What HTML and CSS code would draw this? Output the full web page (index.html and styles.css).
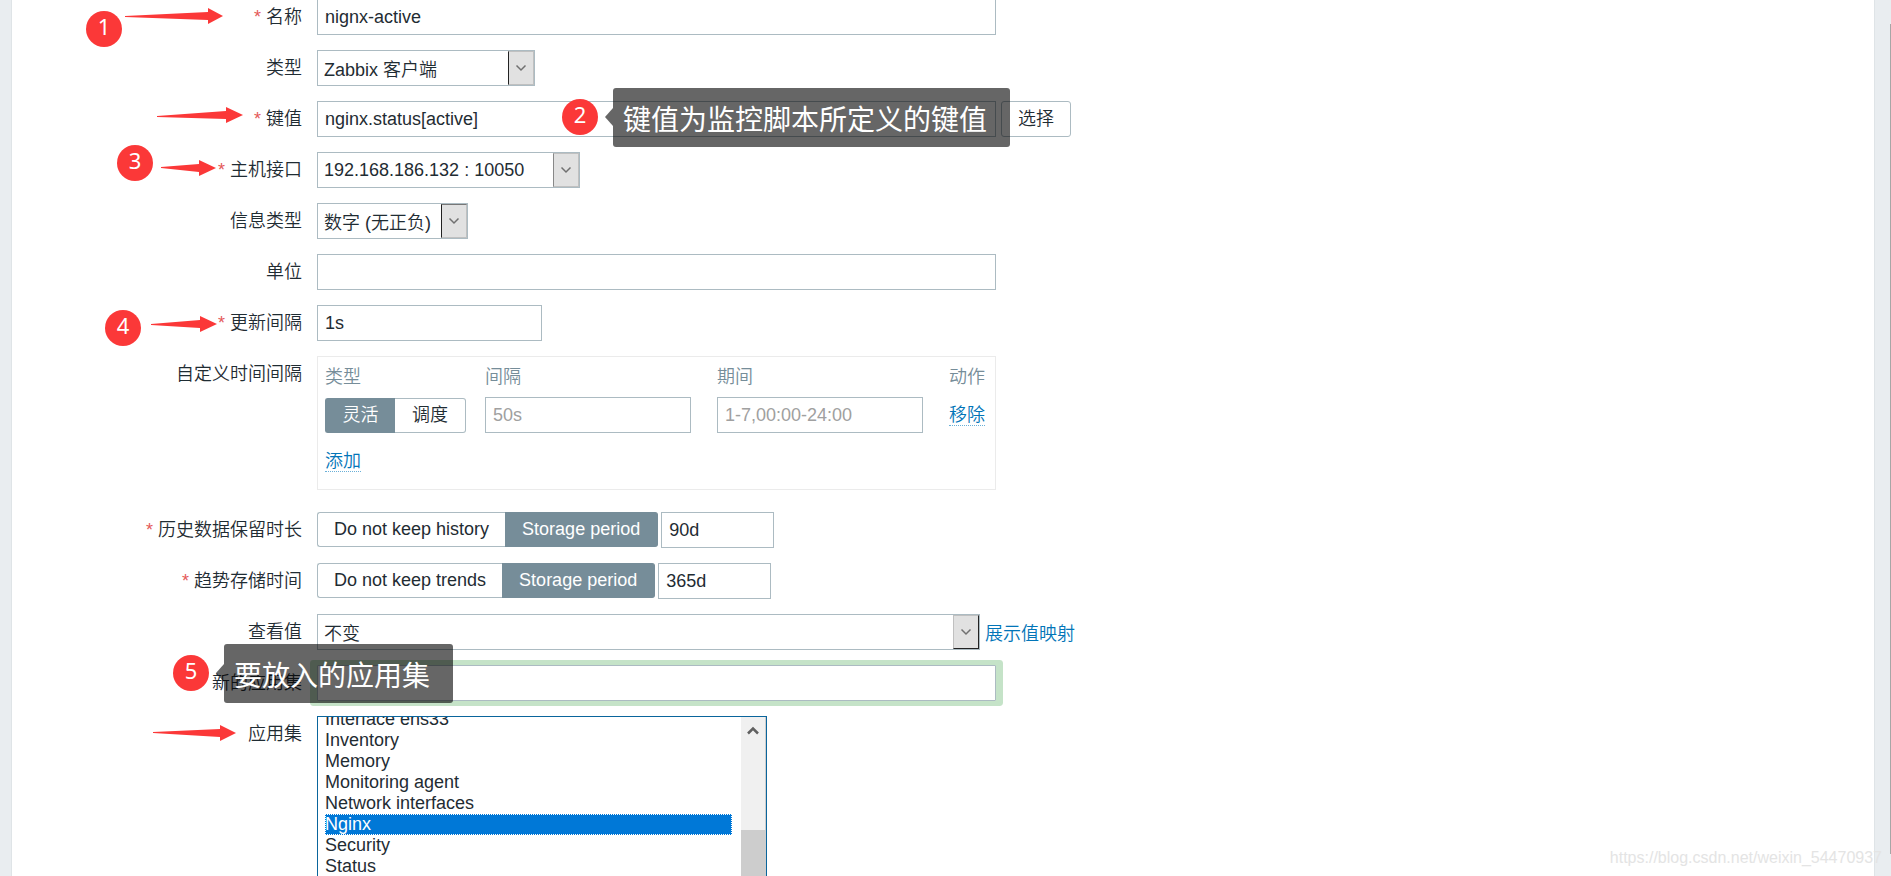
FILE: index.html
```html
<!DOCTYPE html>
<html lang="zh-CN">
<head>
<meta charset="utf-8">
<title>监控项</title>
<link rel="stylesheet" href="styles.css">
</head>
<body>
<main class="panel">
  <form class="form">
    <div class="row">
      <label class="label" for="name"><span class="required">*</span> 名称</label>
      <div class="field"><input class="text wide" id="name" type="text" value="nignx-active"></div>
    </div>
    <div class="row">
      <label class="label" for="type">类型</label>
      <div class="field">
        <div class="select select-type">
          <select id="type"><option>Zabbix 客户端</option></select>
          <span class="arrow arrow-left-dark"><svg viewBox="0 0 12 8"><path d="M1.500 1.500L6 6L10.500 1.500"/></svg></span>
        </div>
      </div>
    </div>
    <div class="row">
      <label class="label" for="key"><span class="required">*</span> 键值</label>
      <div class="field field-spaced">
        <input class="text wide" id="key" type="text" value="nginx.status[active]">
        <button class="button" type="button">选择</button>
      </div>
    </div>
    <div class="row">
      <label class="label" for="host"><span class="required">*</span> 主机接口</label>
      <div class="field">
        <div class="select select-host">
          <select id="host"><option>192.168.186.132 : 10050</option></select>
          <span class="arrow arrow-soft"><svg viewBox="0 0 12 8"><path d="M1.500 1.500L6 6L10.500 1.500"/></svg></span>
        </div>
      </div>
    </div>
    <div class="row">
      <label class="label" for="info">信息类型</label>
      <div class="field">
        <div class="select select-info">
          <select id="info"><option>数字 (无正负)</option></select>
          <span class="arrow arrow-left-dark arrow-top-dark"><svg viewBox="0 0 12 8"><path d="M1.500 1.500L6 6L10.500 1.500"/></svg></span>
        </div>
      </div>
    </div>
    <div class="row">
      <label class="label" for="unit">单位</label>
      <div class="field"><input class="text wide" id="unit" type="text"></div>
    </div>
    <div class="row">
      <label class="label" for="delay"><span class="required">*</span> 更新间隔</label>
      <div class="field"><input class="text medium" id="delay" type="text" value="1s"></div>
    </div>
    <div class="row row-intervals">
      <span class="label">自定义时间间隔</span>
      <div class="field">
        <div class="intervals">
          <table class="intervals-table">
            <thead>
              <tr><th class="col-type">类型</th><th class="col-value">间隔</th><th class="col-value">期间</th><th>动作</th></tr>
            </thead>
            <tbody>
              <tr>
                <td>
                  <div class="segments segments-even">
                    <label class="segment"><input type="radio" name="kind" checked><span>灵活</span></label>
                    <label class="segment"><input type="radio" name="kind"><span>调度</span></label>
                  </div>
                </td>
                <td><input class="text cell" type="text" placeholder="50s" aria-label="间隔"></td>
                <td><input class="text cell" type="text" placeholder="1-7,00:00-24:00" aria-label="期间"></td>
                <td><a class="link dotted" href="#">移除</a></td>
              </tr>
            </tbody>
          </table>
          <a class="link dotted" href="#">添加</a>
        </div>
      </div>
    </div>
    <div class="row">
      <label class="label" for="history"><span class="required">*</span> 历史数据保留时长</label>
      <div class="field field-tight">
        <div class="segments">
          <label class="segment"><input type="radio" name="history"><span>Do not keep history</span></label>
          <label class="segment"><input type="radio" name="history" checked><span>Storage period</span></label>
        </div>
        <input class="text small" id="history" type="text" value="90d">
      </div>
    </div>
    <div class="row">
      <label class="label" for="trends"><span class="required">*</span> 趋势存储时间</label>
      <div class="field field-tight">
        <div class="segments">
          <label class="segment"><input type="radio" name="trends"><span>Do not keep trends</span></label>
          <label class="segment"><input type="radio" name="trends" checked><span>Storage period</span></label>
        </div>
        <input class="text small" id="trends" type="text" value="365d">
      </div>
    </div>
    <div class="row">
      <label class="label" for="view">查看值</label>
      <div class="field field-spaced">
        <div class="select select-view">
          <select id="view"><option>不变</option></select>
          <span class="arrow arrow-right-dark"><svg viewBox="0 0 12 8"><path d="M1.500 1.500L6 6L10.500 1.500"/></svg></span>
        </div>
        <a class="link link-lowered" href="#">展示值映射</a>
      </div>
    </div>
    <div class="row">
      <label class="label" for="newapp">新的应用集</label>
      <div class="field"><input class="text wide highlighted" id="newapp" type="text"></div>
    </div>
    <div class="row">
      <label class="label" for="apps">应用集</label>
      <div class="field">
        <div class="listbox">
          <select class="list" id="apps" multiple size="9">
            <option>Interface ens33</option>
            <option>Inventory</option>
            <option>Memory</option>
            <option>Monitoring agent</option>
            <option>Network interfaces</option>
            <option selected>Nginx</option>
            <option>Security</option>
            <option>Status</option>
          </select>
          <div class="scrollbar">
            <svg class="scroll-up" viewBox="0 0 12 9"><path d="M1 7.500L6 2.500L11 7.500"/></svg>
            <div class="thumb"></div>
          </div>
        </div>
      </div>
    </div>
  </form>
</main>

<div class="page-edge"></div>

<span class="badge badge-1">1</span>
<span class="badge badge-2">2</span>
<span class="badge badge-3">3</span>
<span class="badge badge-4">4</span>
<span class="badge badge-5">5</span>

<svg class="pointer pointer-name" viewBox="0 0 98 16"><path d="M0 8L83 4V0L98 8L83 16V12L0 9Z"/></svg>
<svg class="pointer pointer-key" viewBox="0 0 86 16"><path d="M0 9L69 4V0L86 8L69 16V12L0 10Z"/></svg>
<svg class="pointer pointer-host" viewBox="0 0 55 16"><path d="M0 7L38 4V0L55 8L38 16V12L0 8Z"/></svg>
<svg class="pointer pointer-delay" viewBox="0 0 66 16"><path d="M0 8L49 4V0L66 8L49 16V12L0 9Z"/></svg>
<svg class="pointer pointer-apps" viewBox="0 0 83 16"><path d="M0 7L67 4V0L83 8L67 16V12L0 8Z"/></svg>

<div class="tip tip-key">键值为监控脚本所定义的键值</div>
<div class="tip tip-apps">要放入的应用集</div>

<div class="watermark">https://blog.csdn.net/weixin_54470937</div>
</body>
</html>
```
FILE: styles.css
```css
* { box-sizing: border-box; }

body {
  position: relative;
  height: 100vh;
  margin: 0;
  overflow: hidden;
  background: #e9edf0;
  color: #1f2c33;
  font: 350 18px/24px "Liberation Sans", "Noto Sans CJK SC", sans-serif;
}

input, select, button { font: inherit; color: inherit; }

.panel {
  height: 100vh;
  margin: 0 16px 0 11px;
  border: solid #dfe4e7;
  border-width: 0 1px;
  overflow: hidden;
  background: #fff;
}

.form {
  display: flex;
  flex-direction: column;
  gap: 15px;
  margin-top: -1px;
}

.row {
  display: grid;
  grid-template-columns: 290px minmax(0, 1fr);
  column-gap: 15px;
  align-items: start;
}
.row-intervals { margin-bottom: 7px; }

.label { padding: 6px 0; text-align: right; }
.required { color: #e45959; }

.field { display: flex; align-items: center; }
.field-spaced { gap: 5px; }
.field-tight { gap: 3px; }

.text {
  height: 36px;
  padding: 0 7px;
  border: 1px solid #acbbc2;
  border-radius: 0;
  background: #fff;
  outline: none;
}
.text::placeholder { color: #a0a0a0; }
.wide { width: 679px; max-width: 100%; }
.medium { width: 225px; }
.small { width: 113px; }
.cell { display: block; width: 206px; }
.highlighted {
  border-radius: 1px;
  box-shadow: 2px 0 0 5px #c5e3c8, -2px 0 0 5px #c5e3c8;
}

.button {
  height: 36px;
  padding: 0 16px;
  border: 1px solid #acbbc2;
  border-radius: 3px;
  background: #fff;
}

.select {
  display: flex;
  height: 36px;
  border: 1px solid #acbbc2;
  position: relative;
}
.select select {
  flex: 1;
  width: 100%;
  padding: 4px 28px 0 6px;
  border: 0;
  background: #fff;
  appearance: none;
  outline: none;
}
.select-type { width: 218px; }
.select-host { width: 263px; }
.select-host select { padding-top: 0; }
.select-info { width: 151px; }
.select-view { width: 663px; max-width: 100%; }

.arrow {
  position: absolute;
  top: 0;
  right: 0;
  bottom: 0;
  display: flex;
  align-items: center;
  justify-content: center;
  width: 26px;
  border: 1px solid #c0c0c0;
  background: #e1e1e1;
  pointer-events: none;
}
.arrow svg { width: 12px; height: 8px; }
.arrow path { fill: none; stroke: #707070; stroke-width: 1.5; }
.arrow-left-dark { border-left-color: #222; }
.arrow-top-dark { border-top-color: #777; }
.arrow-soft { border-left-color: #888; }
.arrow-right-dark { border-right-color: #222; border-bottom-color: #222; }

.link { color: #0275b8; text-decoration: none; }
.link-lowered { padding-top: 4px; }
.dotted { border-bottom: 1px dotted #6ab0d8; }

.intervals {
  width: 679px;
  max-width: 100%;
  height: 134px;
  padding: 8px 7px;
  border: 1px solid #ebebeb;
}
.intervals-table { margin-bottom: 16px; border-collapse: collapse; }
.intervals-table th {
  padding: 0 0 8px;
  color: #768d99;
  font-weight: 350;
  text-align: left;
}
.intervals-table td { padding: 0; }
.intervals-table .col-type { width: 160px; }
.intervals-table .col-value { width: 232px; }

.segments { display: flex; height: 35px; }
.segments-even { width: 141px; }
.segments-even .segment { flex: 1; }
.field-tight { align-items: flex-start; }
.segment { display: flex; }
.segment input { position: absolute; opacity: 0; }
.segment span {
  flex: 1;
  padding: 4px 16px;
  border: 1px solid #acbbc2;
  text-align: center;
  white-space: nowrap;
}
.segment:first-child span { border-right: 0; border-radius: 3px 0 0 3px; }
.segment:last-child span { padding: 4px 17px; border-left: 0; border-radius: 0 3px 3px 0; }
.segment input:checked + span {
  border-color: #768d99;
  background: #768d99;
  color: #fff;
}

.listbox {
  display: flex;
  width: 450px;
  height: 214px;
  border: 1px solid #0a659c;
}
.list {
  flex: 1;
  height: 100%;
  padding: 0 9px 0 7px;
  border: 0;
  overflow: hidden;
  outline: none;
}
.list option { min-height: 21px; padding: 0; line-height: 21px; }
.list option:first-child { margin-top: -8px; }
.list option:checked {
  background: #0078d7 linear-gradient(#0078d7, #0078d7);
  outline: 1px dotted #fff;
  outline-offset: -1px;
  -webkit-text-fill-color: #fff;
}
.scrollbar {
  width: 25px;
  border-right: 1px solid #cdcdcd;
  background: #f0f0f0;
}
.scroll-up { display: block; width: 12px; height: 9px; margin: 9px 6px 95px; }
.scroll-up path { fill: none; stroke: #606060; stroke-width: 2.5; }
.thumb { height: 99px; background: #cdcdcd; }

.page-edge {
  position: absolute;
  top: 24px;
  right: 0;
  bottom: 22px;
  width: 1px;
  background: #a6a6a6;
}

.badge {
  position: absolute;
  width: 36px;
  height: 36px;
  border-radius: 50%;
  background: #fb3838;
  color: #fff;
  font: 400 22px/30px "Noto Sans", sans-serif;
  text-align: center;
}
.badge-1 { left: 86px; top: 11px; }
.badge-2 { left: 562px; top: 99px; }
.badge-3 { left: 117px; top: 145px; }
.badge-4 { left: 105px; top: 310px; }
.badge-5 { left: 173px; top: 655px; }

.pointer { position: absolute; height: 16px; fill: #fb3838; }
.pointer-name { left: 125px; top: 8px; width: 98px; }
.pointer-key { left: 157px; top: 107px; width: 86px; }
.pointer-host { left: 161px; top: 160px; width: 55px; }
.pointer-delay { left: 151px; top: 316px; width: 66px; }
.pointer-apps { left: 153px; top: 725px; width: 83px; }

.tip {
  position: absolute;
  padding: 14px 23px 8px 10px;
  border-radius: 3px;
  background: rgba(0, 0, 0, .6);
  color: #fff;
  font-size: 28px;
  font-weight: 400;
  line-height: 37px;
  white-space: nowrap;
}
.tip::before {
  content: "";
  position: absolute;
  top: 20px;
  right: 100%;
  border: solid transparent;
  border-width: 9px 8px 9px 0;
  border-right-color: rgba(0, 0, 0, .6);
}
.tip-key { left: 613px; top: 88px; }
.tip-apps { left: 224px; top: 644px; }

.watermark {
  position: absolute;
  right: 9px;
  bottom: 6px;
  color: #e4e4e4;
  font-size: 16px;
}
```
